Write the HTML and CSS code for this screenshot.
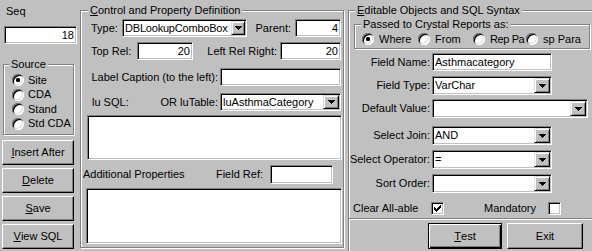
FILE: index.html
```html
<!DOCTYPE html>
<html>
<head>
<meta charset="utf-8">
<title>Control and Property Definition</title>
<link rel="stylesheet" href="styles.css">
</head>
<body>
<div class="dlg">
  <div class="left">
    <div class="seq-lbl">Seq</div>
    <div class="tb sunken num seq">18</div>
    <fieldset class="grp source">
      <legend>Source</legend>
      <div class="opt"><span class="rb on"></span>Site</div>
      <div class="opt"><span class="rb"></span>CDA</div>
      <div class="opt"><span class="rb"></span>Stand</div>
      <div class="opt"><span class="rb"></span>Std CDA</div>
    </fieldset>
    <div class="btn side first"><u>I</u>nsert After</div>
    <div class="btn side"><u>D</u>elete</div>
    <div class="btn side"><u>S</u>ave</div>
    <div class="btn side"><u>V</u>iew SQL</div>
  </div>

  <fieldset class="grp mid">
    <legend><u>C</u>ontrol and Property Definition</legend>
    <div class="row r1">
      <span class="type-lbl">Type:</span>
      <div class="combo sunken w125 tight"><span class="val">DBLookupComboBox</span><span class="dd narrow"><svg class="arr" width="7" height="4" viewBox="0 0 7 4"><path d="M0 0h7v1h-1v1h-1v1h-1v1h-1v-1h-1v-1h-1v-1h-1z"/></svg></span></div>
      <span class="par-lbl">Parent:</span>
      <div class="tb sunken num w46">4</div>
    </div>
    <div class="row r2">
      <span class="toprel-lbl">Top Rel:</span>
      <div class="tb sunken num w56">20</div>
      <span class="lrr-lbl">Left Rel Right:</span>
      <div class="tb sunken num w61">20</div>
    </div>
    <div class="row r3">
      <span class="cap-lbl">Label Caption (to the left):</span>
      <div class="tb sunken w121"></div>
    </div>
    <div class="row r4">
      <span class="lusql-lbl">lu SQL:</span>
      <span class="lut-lbl">OR luTable:</span>
      <div class="combo sunken w121"><span class="val">luAsthmaCategory</span><span class="dd"><svg class="arr" width="7" height="4" viewBox="0 0 7 4"><path d="M0 0h7v1h-1v1h-1v1h-1v1h-1v-1h-1v-1h-1v-1h-1z"/></svg></span></div>
    </div>
    <div class="sunken ta1"></div>
    <div class="row r5">
      <span class="add-lbl">Additional Properties</span>
      <span class="fref-lbl">Field Ref:</span>
      <div class="tb sunken w63"></div>
    </div>
    <div class="sunken ta2"></div>
  </fieldset>

  <div class="right">
    <fieldset class="grp edit">
      <legend><u>E</u>ditable Objects and SQL Syntax</legend>
      <fieldset class="grp pass">
        <legend>Passed to Crystal Reports as:</legend>
        <div class="opts">
          <div class="popt p1"><span class="rb on"></span>Where</div>
          <div class="popt p2"><span class="rb"></span>From</div>
          <div class="popt p3"><span class="rb"></span><span class="rp">Rep Pa</span></div>
          <div class="popt p4"><span class="rb"></span>sp Para</div>
        </div>
      </fieldset>
      <div class="frow fr-name">
        <span class="flbl">Field Name:</span>
        <div class="tb sunken w120 h18">Asthmacategory</div>
      </div>
      <div class="frow fr-type">
        <span class="flbl">Field Type:</span>
        <div class="combo sunken w120 h19"><span class="val">VarChar</span><span class="dd"><svg class="arr" width="7" height="4" viewBox="0 0 7 4"><path d="M0 0h7v1h-1v1h-1v1h-1v1h-1v-1h-1v-1h-1v-1h-1z"/></svg></span></div>
      </div>
      <div class="frow fr-def">
        <span class="flbl">Default Value:</span>
        <div class="combo sunken w156 h19"><span class="val"></span><span class="dd"><svg class="arr" width="7" height="4" viewBox="0 0 7 4"><path d="M0 0h7v1h-1v1h-1v1h-1v1h-1v-1h-1v-1h-1v-1h-1z"/></svg></span></div>
      </div>
      <div class="frow fr-join">
        <span class="flbl">Select Join:</span>
        <div class="combo sunken w120 h19"><span class="val">AND</span><span class="dd"><svg class="arr" width="7" height="4" viewBox="0 0 7 4"><path d="M0 0h7v1h-1v1h-1v1h-1v1h-1v-1h-1v-1h-1v-1h-1z"/></svg></span></div>
      </div>
      <div class="frow fr-op">
        <span class="flbl">Select Operator:</span>
        <div class="combo sunken w120 h19"><span class="val">=</span><span class="dd"><svg class="arr" width="7" height="4" viewBox="0 0 7 4"><path d="M0 0h7v1h-1v1h-1v1h-1v1h-1v-1h-1v-1h-1v-1h-1z"/></svg></span></div>
      </div>
      <div class="frow fr-sort">
        <span class="flbl">Sort Order:</span>
        <div class="combo sunken w120 h19"><span class="val"></span><span class="dd"><svg class="arr" width="7" height="4" viewBox="0 0 7 4"><path d="M0 0h7v1h-1v1h-1v1h-1v1h-1v-1h-1v-1h-1v-1h-1z"/></svg></span></div>
      </div>
      <div class="chkrow">
        <span class="clr">Clear All-able</span>
        <span class="cb sunken"><svg width="7" height="7" viewBox="0 0 7 7"><path d="M0 2h1v3H0zM1 3h1v3H1zM2 4h1v3H2zM3 3h1v3H3zM4 2h1v3H4zM5 1h1v3H5zM6 0h1v3H6z"/></svg></span>
        <span class="mand">Mandatory</span>
        <span class="cb sunken"></span>
      </div>
    </fieldset>
    <div class="foot">
      <div class="btn def test"><u>T</u>est</div>
      <div class="btn exit">Exit</div>
    </div>
  </div>
</div>
</body>
</html>
```

FILE: styles.css
```css
* { box-sizing: border-box; }
html, body { margin: 0; padding: 0; }
body {
  width: 592px;
  height: 251px;
  overflow: hidden;
  background: #c0c0c0;
  color: #000;
  font-family: "Liberation Sans", Arial, sans-serif;
  font-size: 11px;
  line-height: 13px;
}
u { text-underline-offset: 1px; }

.dlg {
  display: flex;
  align-items: flex-start;
  width: 592px;
  height: 251px;
  overflow: hidden;
}

/* ---------- 3D pieces ---------- */
.sunken {
  background: #fff;
  border: 1px solid;
  border-color: #808080 #fff #fff #808080;
  box-shadow: inset 1px 1px 0 #000, inset -1px -1px 0 #c0c0c0;
}
.tb {
  display: flex;
  align-items: center;
  height: 18px;
  padding: 0 2px;
  white-space: nowrap;
  overflow: hidden;
  flex: none;
}
.tb.num { justify-content: flex-end; }

.combo {
  display: flex;
  height: 18px;
  flex: none;
}
.combo .val {
  flex: 1;
  display: flex;
  align-items: center;
  padding-left: 2px;
  overflow: hidden;
  white-space: nowrap;
  min-width: 0;
}
.combo.tight .val { letter-spacing: -0.2px; }
.dd {
  flex: none;
  width: 16px;
  margin: 1px 1px 1px 0;
  background: #c0c0c0;
  border: 1px solid;
  border-color: #dfdfdf #000 #000 #dfdfdf;
  box-shadow: inset 1px 1px 0 #fff, inset -1px -1px 0 #808080;
  display: flex;
  align-items: center;
  justify-content: center;
}
.dd.narrow { width: 14px; }
.arr { display: block; fill: #000; }

.rb {
  position: relative;
  flex: none;
  width: 12px;
  height: 12px;
  border-radius: 50%;
  background: #fff;
  box-shadow: inset 1px 1px 0 #808080, inset -1px -1px 0 #fff, inset 2px 2px 0 #000, inset -2px -2px 0 #dfdfdf;
}
.rb.on::after {
  content: "";
  position: absolute;
  left: 4px;
  top: 4px;
  width: 4px;
  height: 4px;
  border-radius: 1.5px;
  background: #000;
}

.cb {
  flex: none;
  width: 13px;
  height: 13px;
  display: flex;
  align-items: center;
  justify-content: center;
}
.cb svg { display: block; fill: #000; }

.btn {
  display: flex;
  align-items: center;
  justify-content: center;
  flex: none;
  background: #c0c0c0;
  border: 1px solid;
  border-color: #fff #000 #000 #fff;
  box-shadow: inset -1px -1px 0 #808080;
  white-space: nowrap;
}
.btn.def {
  border: 1px solid #000;
  box-shadow: inset 1px 1px 0 #fff, inset -1px -1px 0 #000, inset -2px -2px 0 #808080;
}

.grp {
  margin: 0;
  padding: 0;
  min-width: 0;
  border: 1px solid #808080;
  box-shadow: inset 1px 1px 0 #fff, 1px 1px 0 #fff;
}
.grp > legend {
  margin-left: 6px;
  padding: 0 2px;
  line-height: 13px;
  background: #c0c0c0;
  white-space: nowrap;
}

/* ---------- left column ---------- */
.left {
  flex: none;
  width: 80px;
  display: flex;
  flex-direction: column;
  align-items: flex-start;
  padding-left: 2px;
}
.seq-lbl { margin: 5px 0 0 4px; }
.seq { margin: 8px 0 0 2px; width: 73px; }
.source {
  margin: 14px 0 0 1px;
  width: 71px;
  padding-bottom: 3px;
}
.source > legend { margin-left: 5px; }
.opt {
  display: flex;
  align-items: center;
  gap: 4px;
  height: 14.5px;
  padding-left: 8px;
  white-space: nowrap;
}
.source legend + .opt { margin-top: 2px; }
.side { width: 72px; height: 25px; margin-top: 3px; }
.side.first { margin-top: 5px; }

/* ---------- middle group ---------- */
.mid {
  flex: none;
  width: 264px;
  margin-top: 4px;
  padding-bottom: 3px;
}
.mid > legend { margin-left: 7px; }
.row {
  display: flex;
  align-items: center;
  margin-right: 2px;
  white-space: nowrap;
}
.r1 { margin-top: 2px; height: 18px; }
.r2 { margin-top: 5px; height: 18px; }
.r3 { margin-top: 8px; height: 18px; }
.r4 { margin-top: 7px; height: 18px; }
.r5 { margin-top: 5px; height: 19px; }

.type-lbl { flex: none; width: 41px; padding-left: 10px; }
.par-lbl { flex: 1; text-align: right; padding-right: 4px; }
.toprel-lbl { flex: none; width: 56px; padding-left: 10px; }
.lrr-lbl { flex: 1; text-align: right; padding-right: 3px; }
.cap-lbl { flex: 1; text-align: right; padding-right: 2px; }
.lusql-lbl { flex: 1; padding-left: 11px; }
.lut-lbl { flex: none; padding-right: 2px; }
.add-lbl { flex: 1; padding-left: 2px; }
.fref-lbl { flex: none; padding-right: 7px; }

.w46 { width: 46px; }
.w56 { width: 56px; }
.w61 { width: 61px; }
.w63 { width: 63px; height: 19px; margin-right: 8px; }
.w120 { width: 120px; }
.w121 { width: 121px; }
.w125 { width: 125px; }
.w156 { width: 156px; }
.h18 { height: 18px; }
.h19 { height: 19px; }

.ta1 { margin: 4px 1px 0 6px; height: 45px; }
.ta2 { margin: 4px 1px 0 5px; height: 56px; }

/* ---------- right column ---------- */
.right {
  flex: none;
  align-self: stretch;
  width: 250px;
  margin-left: 4px;
  display: flex;
  flex-direction: column;
}
.edit {
  width: 250px;
  margin-top: 4px;
  padding-bottom: 3px;
}
.pass {
  margin: 1px 0 0 5px;
  width: 236px;
  padding-bottom: 2px;
}
.opts {
  display: flex;
  height: 14px;
  margin-top: 1px;
  padding-left: 7px;
}
.popt {
  flex: none;
  display: flex;
  align-items: center;
  gap: 5px;
  white-space: nowrap;
}
.p1 { width: 56px; }
.p2 { width: 55px; }
.p3 { width: 53px; }
.p4 { width: 60px; }
.rp { letter-spacing: -0.4px; }

.frow { display: flex; align-items: center; }
.flbl {
  flex: none;
  width: 81px;
  margin-right: 2px;
  text-align: right;
  white-space: nowrap;
}
.fr-name { margin-top: 4px; }
.fr-type { margin-top: 5px; }
.fr-def { margin-top: 4px; }
.fr-join { margin-top: 8px; }
.fr-op { margin-top: 5px; }
.fr-sort { margin-top: 5px; }

.chkrow {
  display: flex;
  align-items: center;
  height: 13px;
  margin-top: 9px;
  white-space: nowrap;
}
.clr { flex: none; width: 82px; padding-left: 4px; }
.mand { flex: none; width: 104px; text-align: right; padding-right: 12px; }

.foot {
  flex: 1;
  display: flex;
  align-items: flex-start;
  padding-top: 4px;
  border-left: 1px solid #808080;
  box-shadow: inset 1px 0 0 #fff;
}
.test { margin-left: 79px; width: 74px; height: 26px; }
.exit { margin-left: 5px; width: 76px; height: 26px; }
```
